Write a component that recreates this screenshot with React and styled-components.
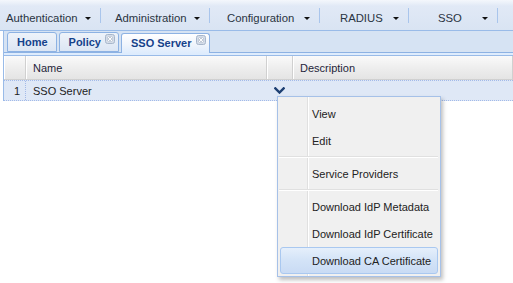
import { Fragment } from "react";
import styled, { createGlobalStyle } from "styled-components";

const GlobalStyle = createGlobalStyle`
  html, body {
    margin: 0;
    padding: 0;
    background: #fff;
  }
  body {
    font-family: "Liberation Sans", Arial, sans-serif;
    font-size: 11px;
    color: #222;
  }
`;

const Page = styled.div`
  position: relative;
  width: 513px;
  height: 283px;
  overflow: hidden;
`;

const Toolbar = styled.div`
  display: flex;
  align-items: center;
  height: 25px;
  padding-top: 5px;
  background: linear-gradient(#f4f7fc 0%, #e1e9f6 20%, #d9e4f3 100%);
  border-bottom: 1px solid #99bbe8;
`;

const MenuButton = styled.div`
  display: flex;
  align-items: center;
  width: ${(p) => p.$width}px;
  padding-left: ${(p) => p.$pad}px;
  padding-right: 9px;
  box-sizing: border-box;
  color: #2a3442;
  font-size: 11.3px;
  white-space: nowrap;
`;

const ButtonLabel = styled.span`
  flex: 1;
`;

const Arrow = styled.span`
  width: 0;
  height: 0;
  border-left: 3px solid transparent;
  border-right: 3px solid transparent;
  border-top: 3px solid #111;
  margin-top: 1px;
`;

const Separator = styled.span`
  width: 1px;
  height: 15px;
  margin-top: -4px;
  background: #a9c5ec;
`;

const Panel = styled.div`
  margin-left: 3px;
  border-left: 1px solid #99bbe8;
`;

const TabStrip = styled.div`
  display: flex;
  align-items: flex-end;
  gap: 2px;
  height: 19px;
  padding: 2px 0 0 3px;
  background: #d6e3f3;
  border-bottom: 1px solid #8db2e3;
`;

const Tab = styled.div`
  display: flex;
  align-items: flex-start;
  height: ${(p) => (p.$active ? 19 : 18)}px;
  margin-bottom: ${(p) => (p.$active ? -1 : 0)}px;
  padding-left: 9px;
  padding-right: ${(p) => (p.$closable ? 3 : 8)}px;
  border: 1px solid #8db2e3;
  border-bottom: ${(p) => (p.$active ? "none" : "1px solid #8db2e3")};
  border-radius: 3px 3px 0 0;
  background: ${(p) =>
    p.$active
      ? "linear-gradient(#ffffff, #eef4fc 60%, #deecfd)"
      : "linear-gradient(#eef3fa, #dce6f4)"};
  color: #15428b;
  font-weight: bold;
`;

const TabLabel = styled.span`
  line-height: 17px;
  padding-top: 1px;
`;

const CloseBox = styled.svg`
  margin-left: 4px;
  margin-top: 1px;
`;

const TabBody = styled.div`
  height: 2px;
  background: #deecfd;
  border-bottom: 1px solid #99bbe8;
`;

const GridRow = styled.div`
  display: grid;
  grid-template-columns: 22px 241px 26px 1fr;
`;

const HeaderRow = styled(GridRow)`
  height: 23px;
  background: linear-gradient(#fafafa, #eeeeee 50%, #e4e4e4);
  border-bottom: 1px solid #d0d0d0;
`;

const HeaderCell = styled.div`
  display: flex;
  align-items: center;
  padding-left: 7px;
  border-right: 1px solid #d0d0d0;
  box-shadow: inset 1px 0 0 #fff;
  color: #1f1f3a;
`;

const DataRow = styled(GridRow)`
  height: 19px;
  background: #dfe8f6;
  border-top: 1px dotted #a3bae9;
  border-bottom: 1px dotted #a3bae9;
`;

const DataCell = styled.div`
  display: flex;
  align-items: center;
  justify-content: ${(p) => (p.$right ? "flex-end" : "flex-start")};
  padding: ${(p) => (p.$right ? "0 5px 0 0" : "0 0 0 7px")};
  border-right: ${(p) => (p.$divider ? "1px dotted #a3bae9" : "none")};
  color: #222;
`;

const Menu = styled.div`
  position: absolute;
  left: 277px;
  top: 96px;
  width: 162px;
  padding: 3px 0 2px;
  background: #f0f0f0;
  border: 1px solid #a6c1e8;
  box-shadow: 2px 3px 4px rgba(0, 0, 0, 0.25);
  display: flex;
  flex-direction: column;

  &::before {
    content: "";
    position: absolute;
    left: 29px;
    top: 0;
    bottom: 0;
    width: 1px;
    background: #e0e0e0;
    border-right: 1px solid #fff;
  }
`;

const MenuItem = styled.div`
  position: relative;
  display: flex;
  align-items: center;
  height: ${(p) => (p.$active ? 25 : 27)}px;
  margin: 0 2px;
  padding-left: ${(p) => (p.$active ? 31 : 32)}px;
  border: ${(p) => (p.$active ? "1px solid #a9c8f0" : "none")};
  border-radius: 3px;
  background: ${(p) =>
    p.$active ? "linear-gradient(#e5effb, #d3e3f7 50%, #c9dbf4)" : "transparent"};
  color: #222;
  z-index: 1;
`;

const MenuSep = styled.div`
  position: relative;
  height: 1px;
  margin: 2px 2px 2px 1px;
  background: #e0e0e0;
  border-bottom: 1px solid #fff;
  z-index: 1;
`;

const Chevron = () => (
  <svg width="11" height="7" viewBox="0 0 11 7">
    <path d="M0.5 0.5 L5.5 5.5 L10.5 0.5" fill="none" stroke="#1d3f72" strokeWidth="2.4" />
  </svg>
);

const Close = () => (
  <CloseBox width="10" height="10" viewBox="0 0 10 10">
    <rect x="0.5" y="0.5" width="9" height="9" rx="2" fill="#d4dce8" stroke="#a7b6cb" />
    <path d="M3 3 L7 7 M7 3 L3 7" stroke="#8f9db2" strokeWidth="2.4" />
    <path d="M3 3 L7 7 M7 3 L3 7" stroke="#fff" strokeWidth="1.2" />
  </CloseBox>
);

const buttons = [
  { label: "Authentication", width: 100, pad: 6 },
  { label: "Administration", width: 108, pad: 14 },
  { label: "Configuration", width: 109, pad: 17 },
  { label: "RADIUS", width: 88, pad: 20 },
  { label: "SSO", width: 88, pad: 29 },
];

const tabs = [
  { label: "Home" },
  { label: "Policy", closable: true },
  { label: "SSO Server", closable: true, active: true },
];

const menu = [
  "View",
  "Edit",
  "-",
  "Service Providers",
  "-",
  "Download IdP Metadata",
  "Download IdP Certificate",
  "Download CA Certificate",
];

export default function App() {
  return (
    <Page>
      <GlobalStyle />
      <Toolbar>
        {buttons.map((b) => (
          <Fragment key={b.label}>
            <MenuButton $width={b.width} $pad={b.pad}>
              <ButtonLabel>{b.label}</ButtonLabel>
              <Arrow />
            </MenuButton>
            <Separator />
          </Fragment>
        ))}
      </Toolbar>
      <Panel>
        <TabStrip>
          {tabs.map((t) => (
            <Tab key={t.label} $active={t.active} $closable={t.closable}>
              <TabLabel>{t.label}</TabLabel>
              {t.closable && <Close />}
            </Tab>
          ))}
        </TabStrip>
        <TabBody />
        <HeaderRow>
          <HeaderCell />
          <HeaderCell>Name</HeaderCell>
          <HeaderCell />
          <HeaderCell>Description</HeaderCell>
        </HeaderRow>
        <DataRow>
          <DataCell $right $divider>1</DataCell>
          <DataCell>SSO Server</DataCell>
          <DataCell>
            <Chevron />
          </DataCell>
          <DataCell />
        </DataRow>
      </Panel>
      <Menu>
        {menu.map((m, i) =>
          m === "-" ? (
            <MenuSep key={i} />
          ) : (
            <MenuItem key={i} $active={i === menu.length - 1}>
              {m}
            </MenuItem>
          )
        )}
      </Menu>
    </Page>
  );
}
